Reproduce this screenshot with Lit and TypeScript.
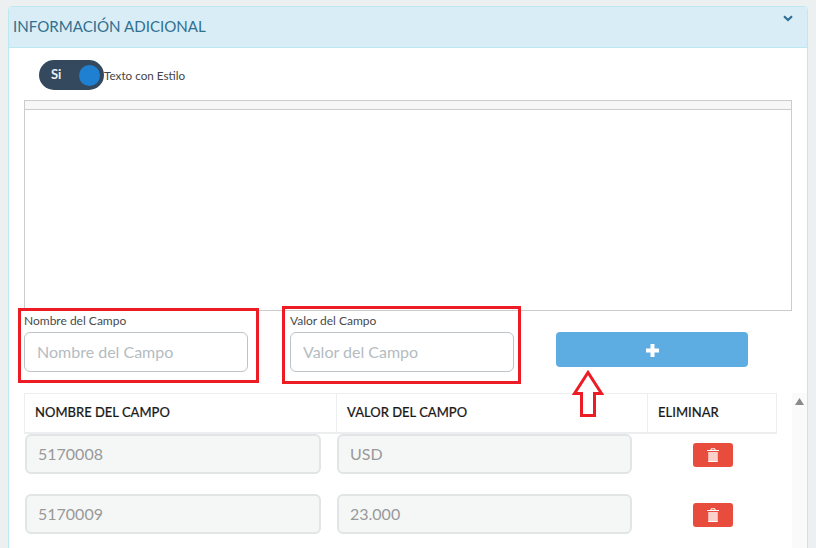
import { LitElement, html, css } from "lit";
import { customElement } from "lit/decorators.js";

const trash = html`<svg width="12" height="14" viewBox="0 0 12 14"><path d="M4 2V.8h4V2M0 2.500h12" fill="none" stroke="#fff" stroke-width="1"/><path d="M1.200 4h9.600v9.500H1.200z" fill="#fbd0cb"/><path d="M1.200 13.500h9.600" stroke="#fff" stroke-width="1"/></svg>`;

@customElement("app-root")
export class AppRoot extends LitElement {
  static styles = css`
    :host { display: block; width: 816px; height: 548px; overflow: hidden; background: #ecf0f1; font-family: Lato, "Open Sans", sans-serif; color: #333; }
    * { box-sizing: border-box; }
    .panel { margin: 6px 8px 0; height: 560px; background: #fff; border: 1px solid #bce8f1; border-radius: 4px 4px 0 0; }
    .head { height: 41px; background: #d9edf7; border-bottom: 1px solid #bce8f1; color: #31708f; font-size: 15.1px; line-height: 39px; padding-left: 4px; display: flex; justify-content: space-between; border-radius: 3px 3px 0 0; }
    .chev { margin: 8px 14px 0 0; }
    .body { padding: 12px 0 0 15px; }
    .toggle-row { display: flex; align-items: center; height: 30px; padding-left: 15px; font-size: 11.7px; color: #444; }
    .label { margin-top: -1px; }
    .toggle { width: 65px; height: 30px; border-radius: 15px; background: #34495e; color: #ecf0f1; font-weight: 700; font-size: 13px; display: flex; align-items: center; justify-content: space-between; padding: 0 4px 0 12px; }
    .toggle span:first-child { margin-top: -2px; }
    .knob { width: 21px; height: 21px; border-radius: 50%; background: #1f7fd1; }
    .editor { width: 768px; height: 211px; margin-top: 10px; border: 1px solid #ccc; }
    .toolbar { height: 9px; background: #f7f7f7; border-bottom: 1px solid #ccc; }
    .form { display: flex; height: 82px; position: relative; }
    .field { width: 224px; position: relative; padding-top: 2px; }
    .field + .field { margin-left: 42px; }
    .field label { display: block; font-size: 12px; line-height: 15px; color: #4a4a4a; margin-bottom: 4px; }
    .field input { display: block; width: 224px; height: 40px; border: 1px solid #bdc3c7; border-radius: 6px; padding: 0 12px 2px; font: 16px Lato, sans-serif; background: #fff; }
    .field input::placeholder { color: #b4bcc2; opacity: 1; }
    .redbox { position: absolute; border: 3px solid #ed1c24; pointer-events: none; }
    .r1 { left: -6px; top: -3px; width: 241px; height: 75px; }
    .r2 { left: -8px; top: -5px; width: 239px; height: 78px; }
    .add { width: 192px; height: 35px; margin: 21px 0 0 42px; background: #5dade2; border: 0; border-radius: 4px; display: flex; align-items: center; justify-content: center; position: relative; padding: 2px 0 0; }
    .arrow { position: absolute; left: 15px; top: 38px; }
    .scroller { display: flex; height: 160px; }
    .content { width: 753px; }
    .track { width: 15px; margin-left: 15px; background: #fafafa; padding: 5px 0 0 3px; }
    .track svg { display: block; }
    .thead { display: grid; grid-template-columns: 311px 311px 129px; height: 41px; border: 1px solid #eceeef; border-bottom-width: 2px; }
    .thead div { font-size: 13px; color: #1a1a1a; line-height: 36px; padding-left: 10px; border-left: 1px solid #eceeef; font-weight: 500; -webkit-text-stroke: 0.15px #1a1a1a; }
    .thead div:first-child { border-left: 0; }
    .row { display: grid; grid-template-columns: 296px 295px 1fr; column-gap: 16px; margin: 0 0 20px 1px; height: 40px; align-items: center; }
    .ro { height: 40px; border: 2px solid #e1e5e5; background: #f5f7f7; border-radius: 6px; font-size: 16px; line-height: 36px; color: #999; padding-left: 11px; }
    .del { width: 40px; height: 24px; background: #e74c3c; border-radius: 3px; margin: 2px 0 0 45px; display: flex; align-items: center; justify-content: center; }
  `;

  render() {
    const rows = [["5170008", "USD"], ["5170009", "23.000"]];
    return html`
      <section class="panel">
        <header class="head">
          <span>INFORMACIÓN ADICIONAL</span>
          <svg class="chev" width="10" height="7" viewBox="0 0 10 7"><path d="M1 1.200 5 5l4-3.800" fill="none" stroke="#2f6f92" stroke-width="2.200"/></svg>
        </header>
        <div class="body">
          <div class="toggle-row">
            <div class="toggle"><span>Si</span><span class="knob"></span></div>
            <span class="label">Texto con Estilo</span>
          </div>
          <div class="editor"><div class="toolbar"></div></div>
          <div class="form">
            <div class="field">
              <div class="redbox r1"></div>
              <label>Nombre del Campo</label>
              <input placeholder="Nombre del Campo" />
            </div>
            <div class="field">
              <div class="redbox r2"></div>
              <label>Valor del Campo</label>
              <input placeholder="Valor del Campo" />
            </div>
            <button class="add">
              <svg width="15" height="15" viewBox="0 0 15 15"><path d="M5.500 1h4v4.500H14v4H9.500V14h-4V9.500H1v-4h4.500z" fill="#fff"/></svg>
              <svg class="arrow" width="34" height="48" viewBox="0 0 34 48"><path d="M17 2.500 3.500 23.500h7v22h13v-22h7z" fill="#fff" stroke="#ed1c24" stroke-width="3"/></svg>
            </button>
          </div>
          <div class="scroller">
            <div class="content">
              <div class="thead">
                <div>NOMBRE DEL CAMPO</div><div>VALOR DEL CAMPO</div><div>ELIMINAR</div>
              </div>
              ${rows.map(([a, b]) => html`
                <div class="row">
                  <div class="ro">${a}</div>
                  <div class="ro">${b}</div>
                  <div class="del">${trash}</div>
                </div>`)}
            </div>
            <div class="track">
              <svg width="9" height="7" viewBox="0 0 9 7"><path d="M4.500 0 9 7H0z" fill="#8a8a8a"/></svg>
            </div>
          </div>
        </div>
      </section>
    `;
  }
}
